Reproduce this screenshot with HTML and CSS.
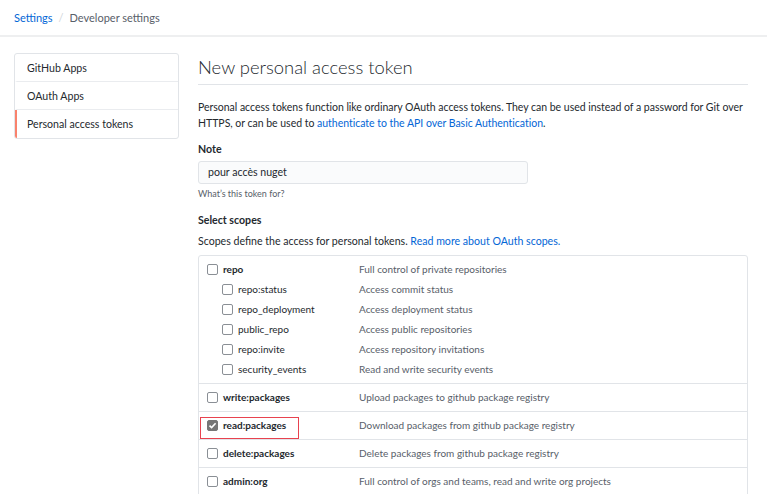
FILE: index.html
```html
<!DOCTYPE html>
<html>
<head>
<meta charset="utf-8">
<link rel="stylesheet" href="styles.css">
</head>
<body>
<header class="crumbs">
  <a class="link" href="#">Settings</a>
  <span class="sep">/</span>
  <span class="current">Developer settings</span>
</header>
<div class="layout">
  <nav class="menu">
    <div class="menu-item">GitHub Apps</div>
    <div class="menu-item">OAuth Apps</div>
    <div class="menu-item active">Personal access tokens</div>
  </nav>
  <main class="main">
    <h1 class="title">New personal access token</h1>
    <p class="lead">Personal access tokens function like ordinary OAuth access tokens. They can be used instead of a password for Git over HTTPS, or can be used to <a class="link" href="#">authenticate to the API over Basic Authentication</a>.</p>
    <div class="field">
      <label class="label">Note</label>
      <div class="input">pour accès nuget</div>
      <div class="hint">What’s this token for?</div>
    </div>
    <div class="label scopes-title">Select scopes</div>
    <p class="scopes-lead">Scopes define the access for personal tokens. <a class="link" href="#">Read more about OAuth scopes.</a></p>
    <div class="scopes">
      <div class="group">
        <div class="row"><span class="cell"><span class="cb"></span><b>repo</b></span><span class="desc">Full control of private repositories</span></div>
        <div class="row sub"><span class="cell"><span class="cb"></span>repo:status</span><span class="desc">Access commit status</span></div>
        <div class="row sub"><span class="cell"><span class="cb"></span>repo_deployment</span><span class="desc">Access deployment status</span></div>
        <div class="row sub"><span class="cell"><span class="cb"></span>public_repo</span><span class="desc">Access public repositories</span></div>
        <div class="row sub"><span class="cell"><span class="cb"></span>repo:invite</span><span class="desc">Access repository invitations</span></div>
        <div class="row sub"><span class="cell"><span class="cb"></span>security_events</span><span class="desc">Read and write security events</span></div>
      </div>
      <div class="group">
        <div class="row"><span class="cell"><span class="cb"></span><b>write:packages</b></span><span class="desc">Upload packages to github package registry</span></div>
      </div>
      <div class="group">
        <div class="row"><span class="cell highlight"><span class="cb checked"><svg viewBox="0 0 11 11" width="11" height="11"><path d="M2.5 5.6 L4.6 7.6 L8.6 3.2" fill="none" stroke="#fff" stroke-width="1.6"/></svg></span><b>read:packages</b></span><span class="desc">Download packages from github package registry</span></div>
      </div>
      <div class="group">
        <div class="row"><span class="cell"><span class="cb"></span><b>delete:packages</b></span><span class="desc">Delete packages from github package registry</span></div>
      </div>
      <div class="group">
        <div class="row"><span class="cell"><span class="cb"></span><b>admin:org</b></span><span class="desc">Full control of orgs and teams, read and write org projects</span></div>
      </div>
    </div>
  </main>
</div>
</body>
</html>
```
FILE: styles.css
```css
* { box-sizing: border-box; }
html, body { margin: 0; background: #fff; }
body {
  font-family: Lato, "Noto Sans", sans-serif;
  font-size: 10.6px;
  color: #24292e;
  overflow: hidden;
}
.link { color: #0366d6; text-decoration: none; }
.crumbs {
  height: 37px;
  padding: 0 14px;
  display: flex;
  align-items: center;
  gap: 6px;
  font-size: 11px;
  border-bottom: 2px solid #eeeff0;
}
.crumbs .sep { color: #d1d5da; }
.crumbs .current { color: #586069; }
.layout {
  display: flex;
  gap: 19px;
  padding: 16px 0 0 14px;
}
.menu {
  width: 165px;
  flex: none;
  border: 1px solid #e1e4e8;
  border-radius: 3px;
  align-self: flex-start;
  overflow: hidden;
}
.menu-item {
  height: 28px;
  line-height: 28px;
  padding-left: 10px;
  font-size: 10.6px;
  border-bottom: 1px solid #eaecef;
  border-left: 2px solid transparent;
}
.menu-item:last-child { border-bottom: 0; }
.menu-item.active { border-left-color: #f9826c; }
.main { width: 550px; flex: none; }
.title {
  margin: 0;
  font-size: 18.4px;
  font-weight: 300;
  line-height: 28px;
  padding-bottom: 3px;
  border-bottom: 1px solid #e1e4e8;
}
.lead {
  margin: 14px 0 0;
  line-height: 16px;
  font-size: 10.5px;
  letter-spacing: -0.02px;
}
.field { margin-top: 10px; }
.label { display: block; font-weight: 700; line-height: 16px; }
.input {
  margin-top: 4px;
  width: 330px;
  height: 23px;
  border: 1px solid #e1e4e8;
  border-radius: 3px;
  background: #fafbfc;
  padding: 0 9px;
  line-height: 21px;
  font-size: 10.6px;
}
.hint {
  margin-top: 3px;
  font-size: 9px;
  color: #586069;
  line-height: 14px;
}
.scopes-title { margin-top: 11px; }
.scopes-lead { margin: 5px 0 0; line-height: 16px; }
.scopes {
  margin-top: 6px;
  border: 1px solid #e1e4e8;
  border-radius: 3px;
}
.group {
  padding: 3px 0 4px;
  border-bottom: 1px solid #e1e4e8;
}
.row {
  display: flex;
  height: 20px;
  align-items: center;
  font-size: 10px;
}
.cell {
  width: 160px;
  flex: none;
  display: flex;
  align-items: center;
  padding-left: 8px;
  position: relative;
}
.row b { font-weight: 700; }
.sub .cell { padding-left: 23px; }
.cb {
  width: 11px;
  height: 11px;
  border: 1px solid #8a8f95;
  border-radius: 2px;
  margin-right: 5px;
  flex: none;
  display: inline-flex;
  background: #fff;
}
.cb.checked { background: #767676; border-color: #767676; }
.cb.checked svg { display: block; margin: -1px; }
.desc { color: #586069; }
.highlight::after {
  content: "";
  position: absolute;
  left: 1px;
  top: -2px;
  width: 97px;
  height: 20px;
  border: 1.5px solid #e8424f;
}
```
